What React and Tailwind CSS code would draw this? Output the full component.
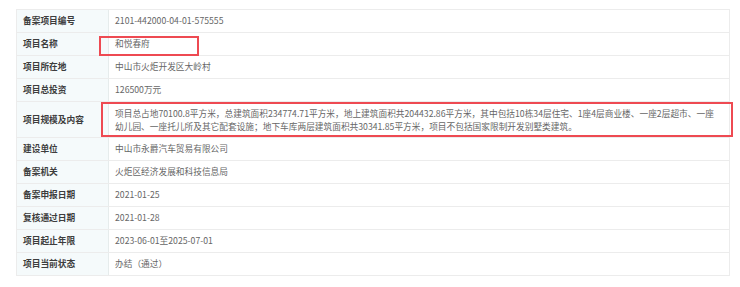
import React from "react";

const ROWS = [
  { label: "备案项目编号", value: "2101-442000-04-01-575555" },
  { label: "项目名称", value: "和悦春府" },
  { label: "项目所在地", value: "中山市火炬开发区大岭村" },
  { label: "项目总投资", value: "126500万元" },
  {
    label: "项目规模及内容",
    value:
      "项目总占地70100.8平方米，总建筑面积234774.71平方米，地上建筑面积共204432.86平方米，其中包括10栋34层住宅、1座4层商业楼、一座2层超市、一座幼儿园、一座托儿所及其它配套设施；地下车库两层建筑面积共30341.85平方米，项目不包括国家限制开发别墅类建筑。",
    tall: true,
  },
  { label: "建设单位", value: "中山市永爵汽车贸易有限公司" },
  { label: "备案机关", value: "火炬区经济发展和科技信息局" },
  { label: "备案申报日期", value: "2021-01-25" },
  { label: "复核通过日期", value: "2021-01-28" },
  { label: "项目起止年限", value: "2023-06-01至2025-07-01" },
  { label: "项目当前状态", value: "办结（通过）" },
];

export default function App() {
  return (
    <div
      className="w-[740px] h-[287px] bg-white pt-[9px] pl-[16px]"
      style={{ fontFamily: '"Noto Sans CJK SC", "Noto Sans", sans-serif' }}
    >
      <div className="relative w-[714px] border border-[#ececec]">
        {ROWS.map((row, i) => (
          <div
            key={row.label}
            className={`flex ${i < ROWS.length - 1 ? "border-b border-[#ececec]" : ""}`}
          >
            <div
              className={`w-[92px] shrink-0 bg-[#f5fafb] border-r border-[#e6ecec] pl-[6px] flex items-center text-[8.7px] font-bold text-[#3d3d3d] ${
                row.tall ? "h-[35px]" : "h-[22px]"
              }`}
            >
              {row.label}
            </div>
            <div
              className={`flex-1 pl-[6px] flex items-center text-[8.7px] text-[#666] ${
                row.tall ? "h-[35px] leading-[13px] pr-[12px]" : "h-[22px] pr-[6px]"
              }`}
            >
              <span>{row.value}</span>
            </div>
          </div>
        ))}

        {/* highlight boxes */}
        <div className="absolute left-[82px] top-[26px] w-[100px] h-[20px] border-2 border-[#ee4a52]" />
        <div className="absolute left-[84px] top-[92px] w-[632px] h-[35px] border-2 border-[#ee4a52]" />
      </div>
    </div>
  );
}
